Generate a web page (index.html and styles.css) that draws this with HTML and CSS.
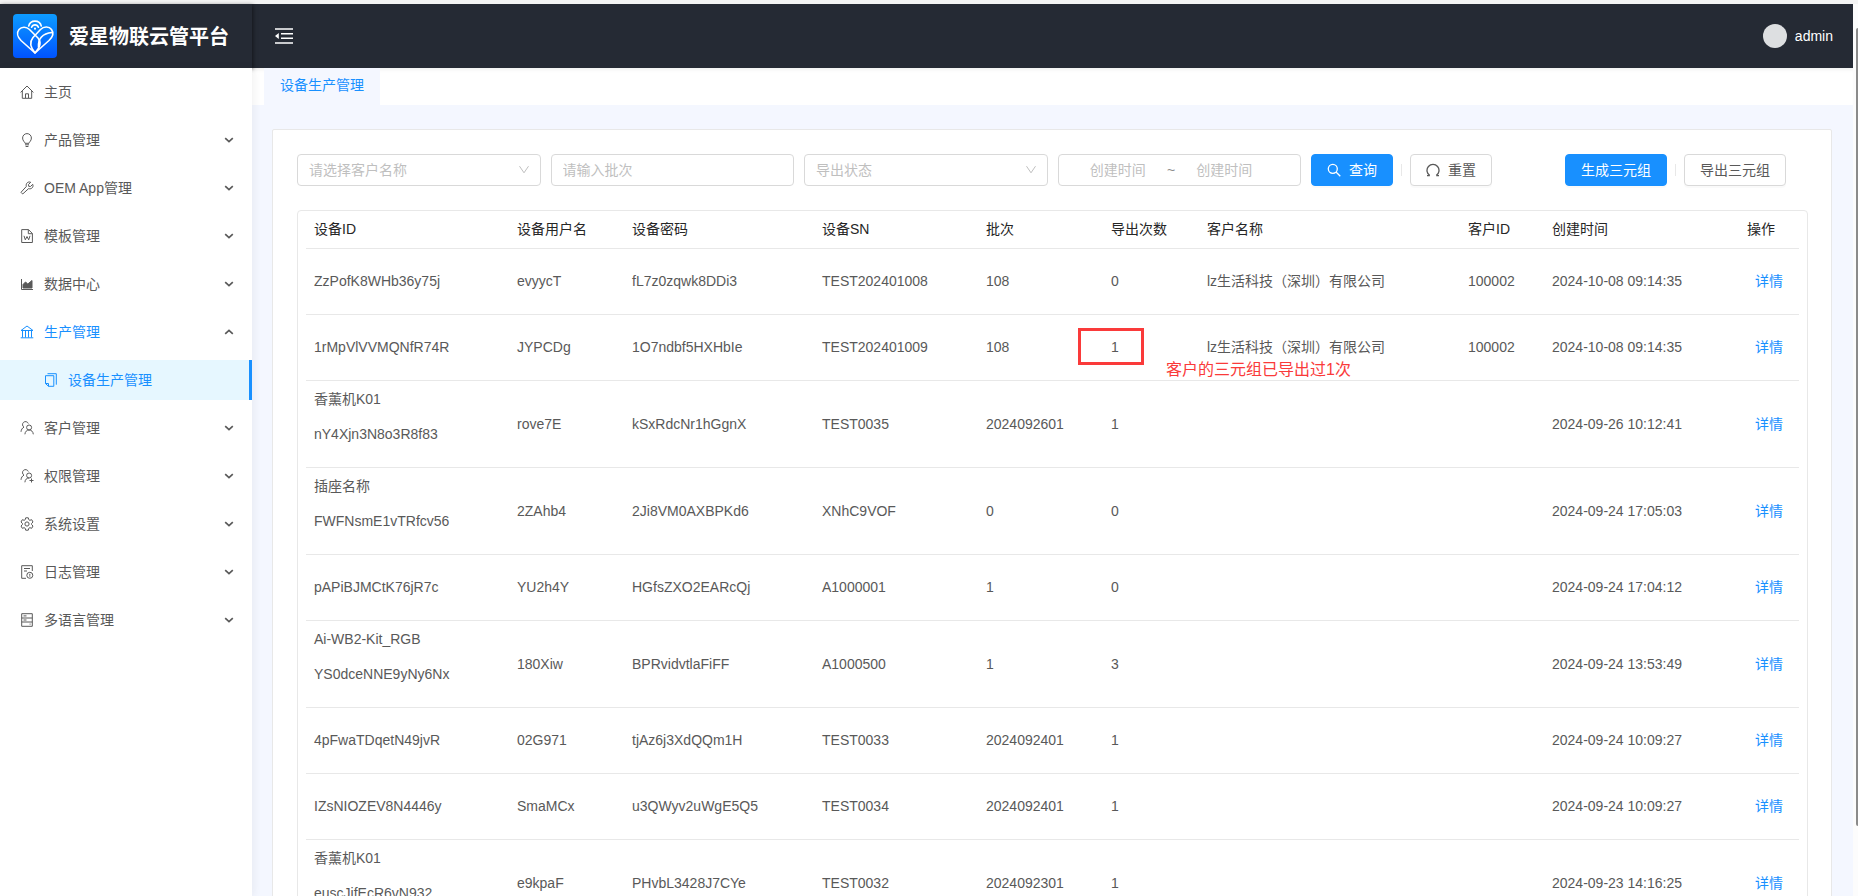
FILE: index.html
```html
<!DOCTYPE html>
<html lang="zh-CN">
<head>
<meta charset="utf-8">
<title>爱星物联云管平台</title>
<link rel="stylesheet" href="styles.css">
</head>
<body>
<svg class="sprite" aria-hidden="true">
  <symbol id="chev" viewBox="0 0 10 10"><path d="M1.2 3.2 5 6.6l3.8-3.4" fill="none" stroke="currentColor" stroke-width="1.7"/></symbol>
  <symbol id="chev-up" viewBox="0 0 10 10"><path d="M1.2 6.8 5 3.4l3.8 3.4" fill="none" stroke="currentColor" stroke-width="1.7"/></symbol>
  <symbol id="down" viewBox="0 0 12 12"><path d="M1.5 2.2 6 8.8l4.500-6.600" fill="none" stroke="currentColor"/></symbol>
</svg>
<div class="app">
  <div class="strip"></div>
  <header class="header">
    <div class="brand">
      <svg class="logo" viewBox="0 0 44 44" aria-hidden="true">
        <defs><linearGradient id="g" x1="0" y1="0" x2="0" y2="1"><stop offset="0" stop-color="#0d9cff"/><stop offset="1" stop-color="#0053ff"/></linearGradient></defs>
        <rect width="44" height="44" rx="4" fill="url(#g)"/>
        <g fill="none" stroke="#fff" stroke-width="1.6" stroke-linecap="round" stroke-linejoin="round">
          <path d="M22 39 8 26.500C4.500 23 3.500 18.500 6 15.500c2.800-3.300 7.500-2.800 10.500 0L25 24c3.500 4 2 9.500-3 15Z"/>
          <path d="M22 39c-5-6-6-10.500-2-15.500l7.500-8C30.500 12.500 36 12 38.500 15.500c2.300 3.200 1.200 7.500-2.500 11L22 39Z"/>
          <path d="M25.500 33c-.5-8 4-13.500 13.500-14.500"/>
          <path d="M15.700 12a6.500 6.500 0 0 1 12.600 0M18.600 13.300a3.600 3.600 0 0 1 6.800 0"/>
          <path d="M22 14.500v.2" stroke-width="2"/>
        </g>
      </svg>
      <h1 class="title">爱星物联云管平台</h1>
    </div>
    <button class="fold" type="button" aria-label="收起菜单">
      <svg viewBox="0 0 18 16" width="18" height="16"><path d="M0 1h18M6 5.700h12M6 10.300h12M0 15h18" stroke="currentColor" stroke-width="1.600"/><path d="M0 8l3.800-3v6z" fill="currentColor"/></svg>
    </button>
    <div class="user"><span class="avatar"></span><span>admin</span></div>
  </header>
  <div class="body">
    <nav class="sider">
      <a class="item" href="#"><svg class="ic" viewBox="0 0 14 14"><path d="M.6 7.400 7 1l6.400 6.400M2.300 6v7.300h9.400V6M5.500 13V8.800h3V13"/></svg><span>主页</span></a>
      <a class="item" href="#"><svg class="ic" viewBox="0 0 14 14"><path d="M5 10.300C4.800 8.800 2.600 8 2.600 5a4.400 4.400 0 0 1 8.800 0c0 3-2.200 3.800-2.400 5.300ZM5 11.800h4M5.600 13.500h2.800"/></svg><span>产品管理</span><svg class="ar"><use href="#chev"/></svg></a>
      <a class="item" href="#"><svg class="ic" viewBox="0 0 14 14"><path d="M12.700 3.300 10.500 5.500 8.700 5.300 8.500 3.500 10.700 1.300C8.200.2 5.600 2 6.300 5.500L1 11.300 2.700 13l5.800-5.300c3.500.7 5.300-1.900 4.200-4.400Z"/></svg><span>OEM App管理</span><svg class="ar"><use href="#chev"/></svg></a>
      <a class="item" href="#"><svg class="ic" viewBox="0 0 14 14"><path d="M1.700.6h6.800l3.900 3.900v9H1.700ZM8.300.6v4.100h4M4 6.800l1.300 4L7 7.500l1.700 3.300 1.300-4"/></svg><span>模板管理</span><svg class="ar"><use href="#chev"/></svg></a>
      <a class="item" href="#"><svg class="ic" viewBox="0 0 14 14"><path d="M1.500 2v10.500H13"/><path d="M3 11V7.500L5.500 5l2.300 2L12 3.500V11Z" fill="currentColor"/></svg><span>数据中心</span><svg class="ar"><use href="#chev"/></svg></a>
      <a class="item open" href="#"><svg class="ic" viewBox="0 0 14 14"><path d="M1 5.500 7 1l6 4.500ZM.7 12.800h12.600M2.500 5.500v7M5.500 5.500v7M8.500 5.500v7M11.500 5.500v7"/></svg><span>生产管理</span><svg class="ar"><use href="#chev-up"/></svg></a>
      <a class="item sub" href="#"><svg class="ic" viewBox="0 0 14 14"><path d="M3.500.7h8.800v11M1.500 2.700h8.300v10.600H4.500l-3-2.700ZM1.500 10.500h3v2.800"/></svg><span>设备生产管理</span></a>
      <a class="item" href="#"><svg class="ic" viewBox="0 0 14 14"><path d="M8.300 2.500A3 3 0 1 0 4 6.200C2.300 7 1.200 8.500 1 10.800M11.600 6.500a2.500 2.500 0 1 1-5 0 2.500 2.500 0 0 1 5 0ZM4.900 13.300c.2-2.700 1.900-4.300 4.200-4.300s4 1.600 4.200 4.300"/></svg><span>客户管理</span><svg class="ar"><use href="#chev"/></svg></a>
      <a class="item" href="#"><svg class="ic" viewBox="0 0 14 14"><path d="M8.300 2.500A3 3 0 1 0 4 6.200C2.300 7 1.200 8.500 1 10.800M11.600 6.500a2.500 2.500 0 1 1-5 0 2.500 2.500 0 0 1 5 0ZM4.900 13.300c.2-2.700 1.700-4.300 4.200-4.300M9.500 11.500h4M11.500 9.500v4"/></svg><span>权限管理</span><svg class="ar"><use href="#chev"/></svg></a>
      <a class="item" href="#"><svg class="ic" viewBox="0 0 14 14"><circle cx="7" cy="7" r="2.100"/><path d="M5.700.8h2.600l.5 1.900 1 .6 1.900-.6L13 5 11.600 6.400v1.200L13 9l-1.300 2.300-1.900-.6-1 .6-.5 1.900H5.700l-.5-1.900-1-.6-1.900.6L1 9l1.400-1.400V6.400L1 5l1.300-2.300 1.900.6 1-.6Z"/></svg><span>系统设置</span><svg class="ar"><use href="#chev"/></svg></a>
      <a class="item" href="#"><svg class="ic" viewBox="0 0 14 14"><path d="M6 13.300H1.700V.7h10.600V6M4 3.500h6M4 6h3"/><circle cx="9.800" cy="10.300" r="3"/><path d="M9.800 8.800v2M9.800 11.300v.8"/></svg><span>日志管理</span><svg class="ar"><use href="#chev"/></svg></a>
      <a class="item" href="#"><svg class="ic" viewBox="0 0 14 14"><path d="M1.700.7h10.600v12.600H1.700ZM1.700 5h10.600M1.700 9h10.600M3.500 2.900h3M3.500 7h3M9.600 11.100h1"/></svg><span>多语言管理</span><svg class="ar"><use href="#chev"/></svg></a>
    </nav>
    <main class="main">
      <div class="tabs"><a class="tab" href="#">设备生产管理</a></div>
      <section class="card">
        <form class="filters">
          <div class="field">
            <select class="box" aria-label="客户名称"><option>请选择客户名称</option></select>
            <svg class="caret"><use href="#down"/></svg>
          </div>
          <div class="field"><input class="box" type="text" placeholder="请输入批次" aria-label="批次"></div>
          <div class="field">
            <select class="box" aria-label="导出状态"><option>导出状态</option></select>
            <svg class="caret"><use href="#down"/></svg>
          </div>
          <div class="field">
            <div class="box range">
              <input type="text" placeholder="创建时间" aria-label="创建时间起"><span>~</span><input type="text" placeholder="创建时间" aria-label="创建时间止">
            </div>
          </div>
          <div class="actions">
            <button class="btn primary" type="button"><svg class="bi" viewBox="0 0 14 14"><circle cx="5.800" cy="5.800" r="4.500"/><path d="m9 9 4.300 4.300"/></svg>查询</button>
            <i class="split"></i>
            <button class="btn" type="button"><svg class="bi" viewBox="0 0 14 14"><path d="M3.800 12.700H1M3.800 12.500A6 6 0 1 1 10.200 12.500M10.200 12.700H13" /></svg>重置</button>
          </div>
          <div class="actions extra">
            <button class="btn primary" type="button">生成三元组</button>
            <i class="split"></i>
            <button class="btn" type="button">导出三元组</button>
          </div>
        </form>
        <div class="tablebox">
          <table class="table">
            <colgroup><col class="c-id"><col class="c-user"><col class="c-pwd"><col class="c-sn"><col class="c-batch"><col class="c-count"><col class="c-name"><col class="c-cid"><col class="c-time"><col class="c-op"></colgroup>
            <thead><tr><th>设备ID</th><th>设备用户名</th><th>设备密码</th><th>设备SN</th><th>批次</th><th>导出次数</th><th>客户名称</th><th>客户ID</th><th>创建时间</th><th class="op">操作</th></tr></thead>
            <tbody>
              <tr><td>ZzPofK8WHb36y75j</td><td>evyycT</td><td>fL7z0zqwk8DDi3</td><td>TEST202401008</td><td>108</td><td>0</td><td>lz生活科技（深圳）有限公司</td><td>100002</td><td>2024-10-08 09:14:35</td><td class="op"><a href="#">详情</a></td></tr>
              <tr><td>1rMpVlVVMQNfR74R</td><td>JYPCDg</td><td>1O7ndbf5HXHbIe</td><td>TEST202401009</td><td>108</td><td class="marked">1<span class="mark"></span><span class="note">客户的三元组已导出过1次</span></td><td>lz生活科技（深圳）有限公司</td><td>100002</td><td>2024-10-08 09:14:35</td><td class="op"><a href="#">详情</a></td></tr>
              <tr><td><p>香薰机K01</p><p>nY4Xjn3N8o3R8f83</p></td><td>rove7E</td><td>kSxRdcNr1hGgnX</td><td>TEST0035</td><td>2024092601</td><td>1</td><td></td><td></td><td>2024-09-26 10:12:41</td><td class="op"><a href="#">详情</a></td></tr>
              <tr><td><p>插座名称</p><p>FWFNsmE1vTRfcv56</p></td><td>2ZAhb4</td><td>2Ji8VM0AXBPKd6</td><td>XNhC9VOF</td><td>0</td><td>0</td><td></td><td></td><td>2024-09-24 17:05:03</td><td class="op"><a href="#">详情</a></td></tr>
              <tr><td>pAPiBJMCtK76jR7c</td><td>YU2h4Y</td><td>HGfsZXO2EARcQj</td><td>A1000001</td><td>1</td><td>0</td><td></td><td></td><td>2024-09-24 17:04:12</td><td class="op"><a href="#">详情</a></td></tr>
              <tr><td><p>Ai-WB2-Kit_RGB</p><p>YS0dceNNE9yNy6Nx</p></td><td>180Xiw</td><td>BPRvidvtlaFiFF</td><td>A1000500</td><td>1</td><td>3</td><td></td><td></td><td>2024-09-24 13:53:49</td><td class="op"><a href="#">详情</a></td></tr>
              <tr><td>4pFwaTDqetN49jvR</td><td>02G971</td><td>tjAz6j3XdQQm1H</td><td>TEST0033</td><td>2024092401</td><td>1</td><td></td><td></td><td>2024-09-24 10:09:27</td><td class="op"><a href="#">详情</a></td></tr>
              <tr><td>IZsNIOZEV8N4446y</td><td>SmaMCx</td><td>u3QWyv2uWgE5Q5</td><td>TEST0034</td><td>2024092401</td><td>1</td><td></td><td></td><td>2024-09-24 10:09:27</td><td class="op"><a href="#">详情</a></td></tr>
              <tr><td><p>香薰机K01</p><p>euscJifEcR6vN932</p></td><td>e9kpaF</td><td>PHvbL3428J7CYe</td><td>TEST0032</td><td>2024092301</td><td>1</td><td></td><td></td><td>2024-09-23 14:16:25</td><td class="op"><a href="#">详情</a></td></tr>
            </tbody>
          </table>
        </div>
      </section>
    </main>
  </div>
  <div class="scroll"><span class="thumb"></span></div>
</div>
</body>
</html>
```
FILE: styles.css
```css
* { box-sizing: border-box; }
body {
  margin: 0;
  font: 14px/21px "Liberation Sans", "Noto Sans CJK SC", sans-serif;
  color: #595959;
  background: #fff;
}
a { color: #1890ff; text-decoration: none; }
button, input, select { font: inherit; }
.sprite { display: none; }

.app {
  display: grid;
  grid-template: 4px 64px minmax(0, 1fr) / minmax(0, 1fr) 5px;
  height: 100vh;
  overflow: hidden;
}
.strip { grid-column: 1 / 3; background: #f4f4f4; }

.header { display: flex; align-items: center; background: #252a34; color: #fff; }
.brand {
  display: flex;
  align-items: center;
  gap: 12px;
  width: 252px;
  height: 64px;
  padding-left: 13px;
  box-shadow: 1px 1px 4px rgba(0, 0, 0, .5);
  position: relative;
}
.logo { width: 44px; height: 44px; }
.title { margin: 0; padding-top: 2px; font-size: 20px; line-height: 28px; font-weight: 700; }
.fold { display: flex; margin: 0 auto 0 23px; padding: 0; border: 0; background: none; color: #fff; }
.user { display: flex; align-items: center; gap: 8px; padding-right: 20px; }
.avatar { width: 24px; height: 24px; border-radius: 50%; background: #dddfe1; }

.body { grid-row: 3; display: flex; min-height: 0; }
.sider {
  display: flex;
  flex-direction: column;
  gap: 8px;
  flex: none;
  width: 252px;
  padding-top: 4px;
  background: #fff;
  box-shadow: 2px 0 8px rgba(29, 35, 41, .06);
  z-index: 1;
}
.item { display: flex; align-items: center; gap: 10px; height: 40px; padding: 0 18px 0 20px; color: #595959; }
.item.open { color: #1890ff; }
.item.sub { padding-left: 44px; color: #1890ff; background: #e6f7ff; border-right: 3px solid #1890ff; }
.ic { width: 14px; height: 14px; fill: none; stroke: currentColor; stroke-width: 1; }
.ar { width: 10px; height: 10px; margin-left: auto; color: #595959; }

.main { flex: 1; min-width: 0; overflow: hidden; background: #f4f7ff; }
.tabs { display: flex; height: 37px; padding-left: 12px; background: #fff; box-shadow: inset 0 4px 4px -3px rgba(0, 0, 0, .08); }
.tab { padding: 7px 16px 0; background: #f4f7ff; }

.card { margin: 24px 21px 0 20px; padding: 24px 23px 24px 24px; background: #fff; border: 1px solid #e8e8e8; border-radius: 2px; }
.filters { display: flex; gap: 10px; padding-right: 22px; }
.field { flex: 1 1 0; min-width: 0; position: relative; }
.box {
  display: block;
  width: 100%;
  height: 32px;
  padding: 0 11px;
  border: 1px solid #d9d9d9;
  border-radius: 4px;
  background: #fff;
  color: #bfbfbf;
  appearance: none;
}
::placeholder { color: #bfbfbf; opacity: 1; }
.caret { position: absolute; right: 11px; top: 10px; width: 12px; height: 12px; color: #bfbfbf; pointer-events: none; }
.range { display: flex; align-items: center; }
.range input { width: 44%; padding: 0; border: 0; background: none; text-align: center; }
.range span { width: 10px; text-align: center; color: #8c8c8c; }
.actions { display: flex; align-items: center; }
.extra { margin-left: 63px; }
.btn {
  display: flex;
  align-items: center;
  gap: 8px;
  height: 32px;
  padding: 0 15px;
  border: 1px solid #d9d9d9;
  border-radius: 4px;
  background: #fff;
  color: #595959;
  box-shadow: 0 2px 0 rgba(0, 0, 0, .02);
  white-space: nowrap;
}
.primary { border-color: #1890ff; background: #1890ff; color: #fff; }
.bi { width: 14px; height: 14px; fill: none; stroke: currentColor; stroke-width: 1.3; }
.split { width: 1px; height: 12px; margin: 0 8px; background: #e8e8e8; }

.tablebox { margin-top: 24px; padding: 0 8px; border: 1px solid #e8e8e8; border-radius: 4px; }
.table { width: 100%; table-layout: fixed; border-collapse: separate; border-spacing: 0; }
.c-id { width: 203px; }
.c-user { width: 115px; }
.c-pwd { width: 190px; }
.c-sn { width: 164px; }
.c-batch { width: 125px; }
.c-count { width: 96px; }
.c-name { width: 261px; }
.c-cid { width: 84px; }
.c-time { width: 179px; }
.c-op { width: 76px; }
th, td { padding: 8px; border-bottom: 1px solid #e8e8e8; text-align: left; white-space: nowrap; }
th { height: 38px; color: #262626; font-weight: 400; }
td { height: 66px; }
td p { margin: 0 0 14px; }
.op { text-align: center; }
.op a { margin-left: 16px; }
.marked { position: relative; }
.mark { position: absolute; left: -25px; top: 13px; width: 66px; height: 37px; border: 3px solid #fa3a3a; }
.note { position: absolute; left: 63px; top: 44px; font-size: 16px; line-height: 22px; color: #fa3a3a; }

.scroll { grid-row: 2 / 4; grid-column: 2; padding: 24px 0 70px 3px; background: #fcfcfc; }
.thumb { display: block; height: 100%; background: #8b8b8b; border-radius: 2px 0 0 2px; }
```
